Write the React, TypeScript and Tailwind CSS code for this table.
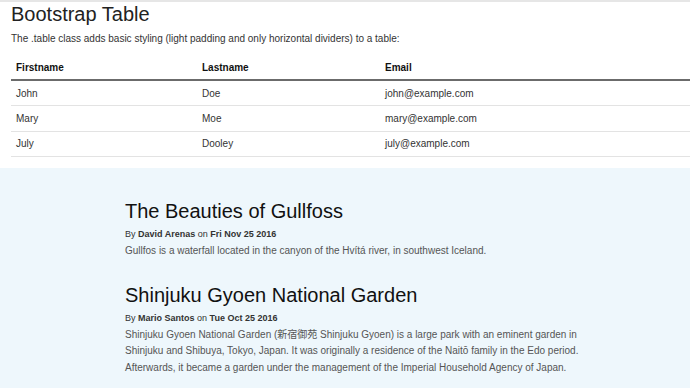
const people = [
  { first: "John", last: "Doe", email: "john@example.com" },
  { first: "Mary", last: "Moe", email: "mary@example.com" },
  { first: "July", last: "Dooley", email: "july@example.com" },
];

const posts = [
  {
    title: "The Beauties of Gullfoss",
    author: "David Arenas",
    date: "Fri Nov 25 2016",
    body: "Gullfos is a waterfall located in the canyon of the Hvítá river, in southwest Iceland.",
  },
  {
    title: "Shinjuku Gyoen National Garden",
    author: "Mario Santos",
    date: "Tue Oct 25 2016",
    body: "Shinjuku Gyoen National Garden (新宿御苑 Shinjuku Gyoen) is a large park with an eminent garden in Shinjuku and Shibuya, Tokyo, Japan. It was originally a residence of the Naitō family in the Edo period. Afterwards, it became a garden under the management of the Imperial Household Agency of Japan.",
  },
];

export default function App() {
  return (
    <div
      className="h-[388px] w-[690px] overflow-hidden bg-white text-[#333]"
      style={{ fontFamily: '"Liberation Sans", Arial, "Noto Sans CJK JP", sans-serif' }}
    >
      <div className="border-t-2 border-[#e6e6e6] pl-[11px] pb-[11px]">
        <h2 className="pt-[2px] text-[20px] leading-[20px] text-[#222]">Bootstrap Table</h2>
        <p className="mt-[8px] text-[10px] leading-[14px]">
          The .table class adds basic styling (light padding and only horizontal dividers) to a table:
        </p>
        <table className="mt-[6px] w-full border-collapse text-left text-[10px]">
          <thead>
            <tr className="border-b-2 border-[#6b6b6b]">
              <th className="w-[186px] px-[5px] pt-[8px] pb-[4px] font-bold text-[#111]">Firstname</th>
              <th className="w-[183px] px-[5px] pt-[8px] pb-[4px] font-bold text-[#111]">Lastname</th>
              <th className="px-[5px] pt-[8px] pb-[4px] font-bold text-[#111]">Email</th>
            </tr>
          </thead>
          <tbody>
            {people.map((p) => (
              <tr key={p.email} className="h-[25.5px] border-b border-[#e3e3e3]">
                <td className="px-[5px]">{p.first}</td>
                <td className="px-[5px]">{p.last}</td>
                <td className="px-[5px]">{p.email}</td>
              </tr>
            ))}
          </tbody>
        </table>
      </div>

      <div className="h-full bg-[#eef7fc] pl-[125px] pt-[30px]">
        {posts.map((post) => (
          <div key={post.title} className="mb-[22px] w-[460px]">
            <h3 className="text-[20px] leading-[26px] text-[#111]">{post.title}</h3>
            <p className="mt-[4px] text-[9px] leading-[12px] text-[#333]">
              By <span className="font-bold">{post.author}</span> on{" "}
              <span className="font-bold">{post.date}</span>
            </p>
            <p className="mt-[3px] text-[10px] leading-[16.5px] text-[#555]">{post.body}</p>
          </div>
        ))}
      </div>
    </div>
  );
}
